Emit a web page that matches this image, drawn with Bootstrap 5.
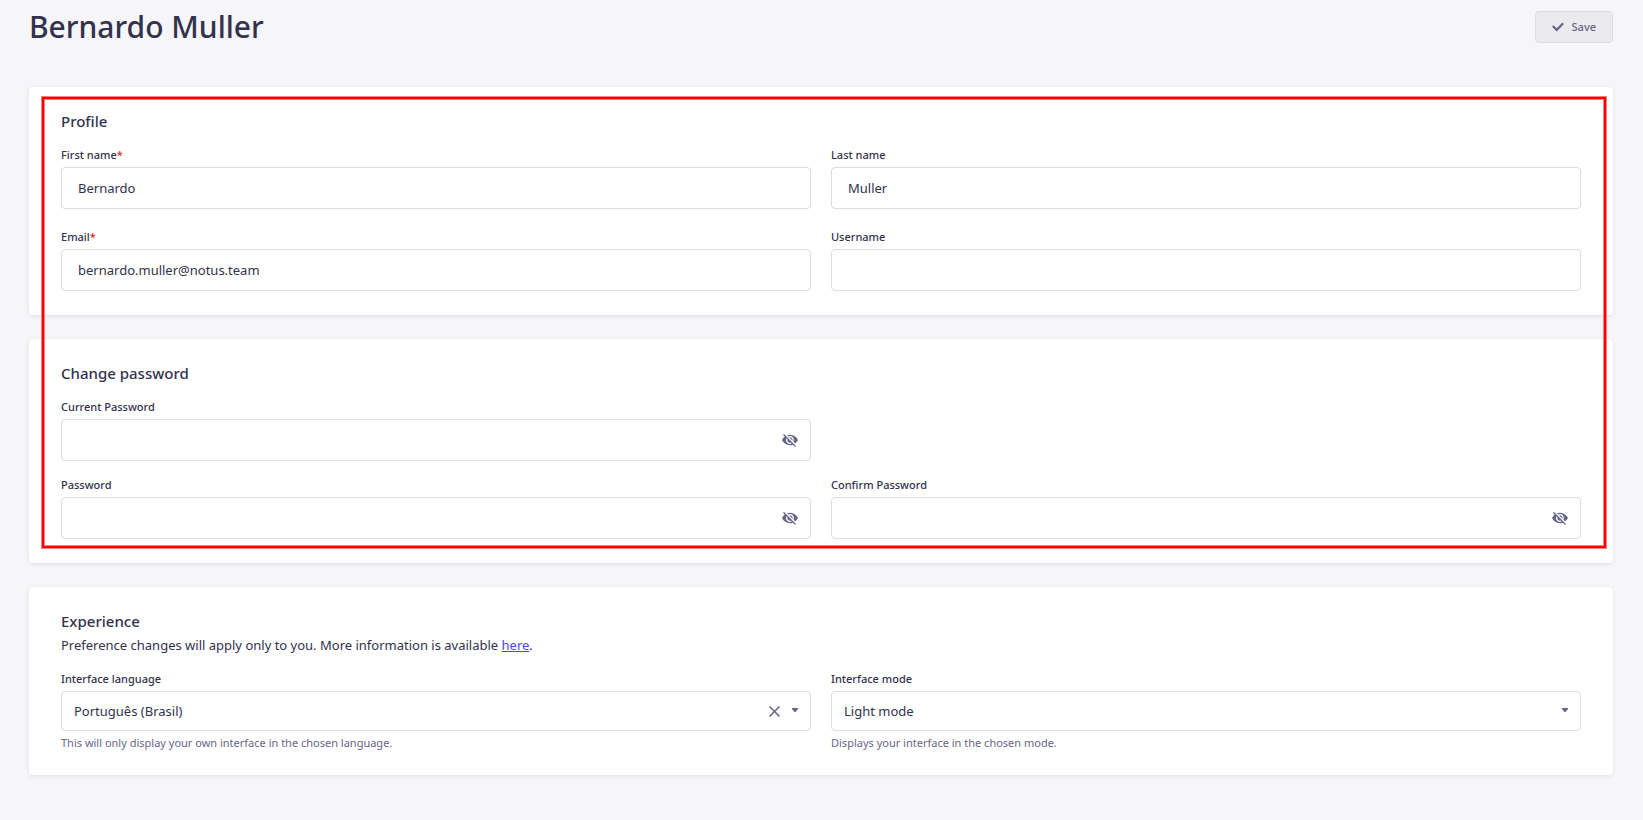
<!DOCTYPE html>
<html lang="en">
<head>
<meta charset="utf-8">
<meta name="viewport" content="width=device-width, initial-scale=1">
<title>Bernardo Muller</title>
<link href="https://cdn.jsdelivr.net/npm/bootstrap@5.3.0/dist/css/bootstrap.min.css" rel="stylesheet">
<style>
  body { background: #f6f6f9; color: #32324d; font: 400 13px/20px "Noto Sans", "Open Sans", sans-serif; }
  .page { padding: 7px 30px 45px 29px; }
  .page-head { min-height: 40px; margin-bottom: 40px; }
  .page-title { font-size: 30px; line-height: 40px; font-weight: 500; }
  .btn-save { --bs-btn-padding-x: 16px; --bs-btn-padding-y: 7px; --bs-btn-font-size: 11px; --bs-btn-line-height: 16px;
    --bs-btn-font-weight: 500; --bs-btn-border-radius: 4px; --bs-btn-disabled-opacity: 1; --bs-btn-disabled-color: #666687;
    --bs-btn-disabled-bg: #eaeaef; --bs-btn-disabled-border-color: #dcdce4; line-height: 16px; }
  .sections { display: grid; gap: 24px; }
  .panel { background: #fff; border-radius: 4px; box-shadow: 0 1px 4px rgba(33, 33, 52, .1); padding: 24px 32px; }
  .panel-title { font-size: 15px; line-height: 20px; font-weight: 500; margin: 0 0 16px; }
  .fields { --bs-gutter-x: 20px; --bs-gutter-y: 20px; }
  .fields-tight { --bs-gutter-y: 16px; }
  .form-label { display: block; font-size: 11px; line-height: 16px; font-weight: 500; margin-bottom: 4px; }
  .required { color: #d02b20; }
  .form-control, .form-select { border-color: #dcdce4; border-radius: 4px; color: #32324d; font-size: 13px; line-height: 20px; }
  .form-control { height: 42px; padding: 10px 16px; }
  .form-control.has-toggle { padding-right: 44px; }
  .form-select { height: 40px; padding: 9px 32px 9px 12px; background-image: none; }
  .form-select.clearable { padding-right: 56px; }
  .form-text { font-size: 11px; line-height: 16px; margin-top: 4px; color: #666687; }
  .inset-tools { position: absolute; top: 0; bottom: 0; right: 13px; display: flex; align-items: center; gap: 12px; color: #666687; pointer-events: none; }
  .inset-tools button { display: flex; padding: 0; border: 0; background: none; color: inherit; pointer-events: auto; }
  .inset-tools .caret { margin-bottom: 2px; }
  svg { display: block; fill: currentColor; }
  a { color: #4945ff; }
  /* annotation frame over the first two panels */
  .highlight { position: absolute; inset: 10px 7px 15px 13px; border: 2px solid #f00; box-shadow: 0 0 0 1px #ff8080, inset 0 0 0 1px #ff8080; pointer-events: none; }
</style>
</head>
<body>
<svg width="0" height="0" class="position-absolute" aria-hidden="true">
  <symbol id="eye-off" viewBox="0 0 24 24"><path d="M4.048 6.875L2.103 4.93a1 1 0 111.414-1.415l16.966 16.966a1 1 0 11-1.414 1.415l-2.686-2.686a12.247 12.247 0 01-4.383.788c-3.573 0-6.559-1.425-8.962-3.783a15.842 15.842 0 01-2.116-2.568 11.096 11.096 0 01-.711-1.213 1.169 1.169 0 010-.875c.124-.258.36-.68.711-1.213.58-.88 1.283-1.75 2.116-2.569.326-.32.663-.622 1.01-.901zm10.539 10.539l-1.551-1.551a4.005 4.005 0 01-4.9-4.9L6.584 9.411a6 6 0 008.002 8.002zM7.617 4.787A12.248 12.248 0 0112 3.998c3.572 0 6.559 1.426 8.961 3.783a15.845 15.845 0 012.117 2.569c.351.532.587.954.711 1.212.116.242.115.636 0 .875-.124.257-.36.68-.711 1.212-.58.88-1.283 1.75-2.117 2.57-.325.32-.662.621-1.01.9l-2.536-2.536a6 6 0 00-8.002-8.002L7.617 4.787zm3.347 3.347A4.005 4.005 0 0116 12c0 .359-.047.706-.136 1.036l-4.9-4.901z"/></symbol>
  <symbol id="caret-down" viewBox="0 0 6 4"><path d="M0 0h6v1L3.500 4h-1L0 1z"/></symbol>
</svg>

<form class="page container-fluid">
  <header class="page-head d-flex align-items-center justify-content-between">
    <h1 class="page-title m-0">Bernardo Muller</h1>
    <button type="submit" class="btn btn-save d-flex align-items-center gap-2" disabled>
      <svg width="12" height="12" viewBox="0 0 24 24" aria-hidden="true"><path d="M20.727 2.970a.2.2 0 01.286 0l2.850 2.890a.2.2 0 010 .280L9.554 20.854a.2.2 0 01-.285 0l-9.130-9.243a.2.2 0 010-.281l2.850-2.892a.2.2 0 01.284 0l6.140 6.209L20.726 2.970z"/></svg>
      Save
    </button>
  </header>

  <main class="sections">
    <div class="sections position-relative">
      <section class="panel">
        <h2 class="panel-title">Profile</h2>
        <div class="row fields">
          <div class="col-6">
            <label class="form-label" for="firstname">First name<span class="required">*</span></label>
            <input class="form-control" id="firstname" type="text" value="Bernardo">
          </div>
          <div class="col-6">
            <label class="form-label" for="lastname">Last name</label>
            <input class="form-control" id="lastname" type="text" value="Muller">
          </div>
          <div class="col-6">
            <label class="form-label" for="email">Email<span class="required">*</span></label>
            <input class="form-control" id="email" type="email" value="bernardo.muller@notus.team">
          </div>
          <div class="col-6">
            <label class="form-label" for="username">Username</label>
            <input class="form-control" id="username" type="text">
          </div>
        </div>
      </section>

      <section class="panel">
        <h2 class="panel-title">Change password</h2>
        <div class="row fields fields-tight">
          <div class="col-6">
            <label class="form-label" for="current">Current Password</label>
            <div class="position-relative">
              <input class="form-control has-toggle" id="current" type="password">
              <div class="inset-tools"><button type="button" aria-label="Show password"><svg width="16" height="16"><use href="#eye-off"/></svg></button></div>
            </div>
          </div>
          <div class="w-100 m-0"></div>
          <div class="col-6">
            <label class="form-label" for="password">Password</label>
            <div class="position-relative">
              <input class="form-control has-toggle" id="password" type="password">
              <div class="inset-tools"><button type="button" aria-label="Show password"><svg width="16" height="16"><use href="#eye-off"/></svg></button></div>
            </div>
          </div>
          <div class="col-6">
            <label class="form-label" for="confirm">Confirm Password</label>
            <div class="position-relative">
              <input class="form-control has-toggle" id="confirm" type="password">
              <div class="inset-tools"><button type="button" aria-label="Show password"><svg width="16" height="16"><use href="#eye-off"/></svg></button></div>
            </div>
          </div>
        </div>
      </section>
      <div class="highlight"></div>
    </div>

    <section class="panel">
      <h2 class="panel-title mb-1">Experience</h2>
      <p class="mb-3">Preference changes will apply only to you. More information is available <a href="#">here</a>.</p>
      <div class="row fields">
        <div class="col-6">
          <label class="form-label" for="language">Interface language</label>
          <div class="position-relative">
            <select class="form-select clearable" id="language"><option>Português (Brasil)</option></select>
            <div class="inset-tools">
              <button type="button" aria-label="Clear"><svg width="11" height="11" viewBox="0 0 24 24"><path d="M24 2.417L21.583 0 12 9.583 2.417 0 0 2.417 9.583 12 0 21.583 2.417 24 12 14.417 21.583 24 24 21.583 14.417 12 24 2.417z"/></svg></button>
              <svg class="caret" width="6" height="4" aria-hidden="true"><use href="#caret-down"/></svg>
            </div>
          </div>
          <div class="form-text">This will only display your own interface in the chosen language.</div>
        </div>
        <div class="col-6">
          <label class="form-label" for="mode">Interface mode</label>
          <div class="position-relative">
            <select class="form-select" id="mode"><option>Light mode</option></select>
            <div class="inset-tools"><svg class="caret" width="6" height="4" aria-hidden="true"><use href="#caret-down"/></svg></div>
          </div>
          <div class="form-text">Displays your interface in the chosen mode.</div>
        </div>
      </div>
    </section>
  </main>
</form>
<script src="https://cdn.jsdelivr.net/npm/bootstrap@5.3.0/dist/js/bootstrap.bundle.min.js"></script>
</body>
</html>
